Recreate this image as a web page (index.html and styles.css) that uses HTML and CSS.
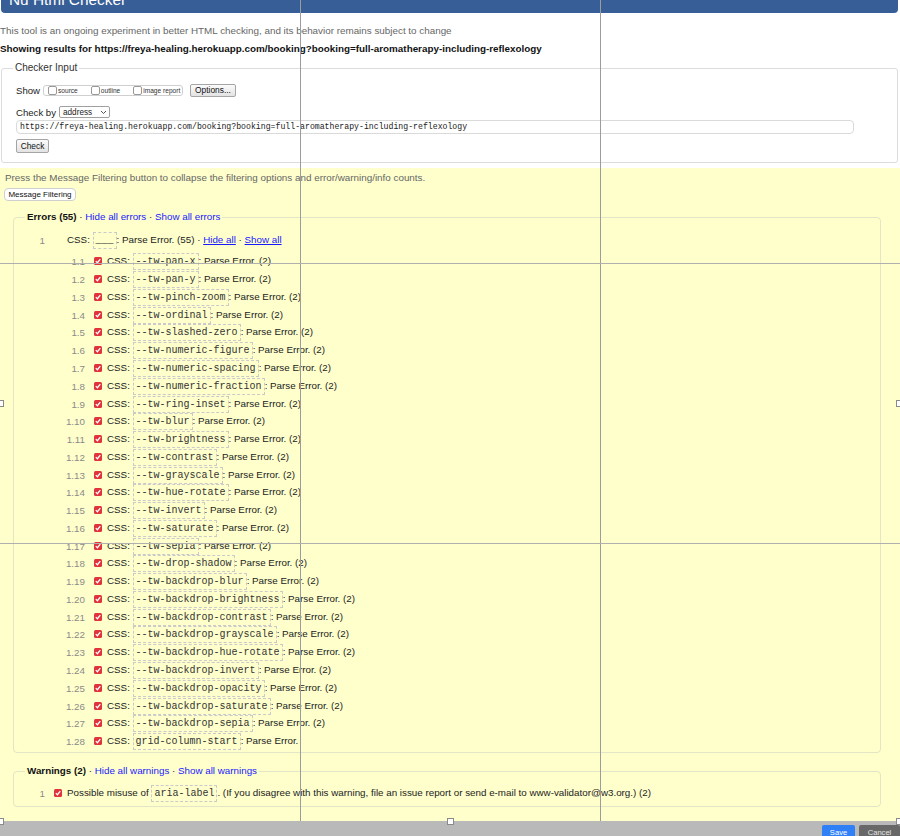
FILE: index.html
```html
<!DOCTYPE html>
<html>
<head>
<meta charset="utf-8">
<title>Nu Html Checker</title>
<link rel="stylesheet" href="styles.css">
</head>
<body>
<div class="stage">
  <div class="page">
    <div class="banner"><h1>Nu Html Checker</h1></div>
    <p class="intro">This tool is an ongoing experiment in better HTML checking, and its behavior remains subject to change</p>
    <p class="showing">Showing results for https://freya-healing.herokuapp.com/booking?booking=full-aromatherapy-including-reflexology</p>
    <fieldset class="checker">
      <legend>Checker Input</legend>
      <div class="row show-row">
        <span class="lbl">Show</span>
        <span class="opts">
          <span class="opt"><span class="box"></span>source</span>
          <span class="opt"><span class="box"></span>outline</span>
          <span class="opt"><span class="box"></span>image report</span>
        </span>
        <span class="btn options">Options...</span>
      </div>
      <div class="row by-row">
        <span class="lbl">Check by</span>
        <span class="select">address<svg class="chev" width="7" height="5" viewBox="0 0 7 5"><polyline points="1,1 3.5,3.5 6,1" fill="none" stroke="#555" stroke-width="1"/></svg></span>
      </div>
      <div class="url">https://freya-healing.herokuapp.com/booking?booking=full-aromatherapy-including-reflexology</div>
      <div class="btn check">Check</div>
    </fieldset>
    <div class="results">
      <p class="press">Press the Message Filtering button to collapse the filtering options and error/warning/info counts.</p>
      <div class="btn filter">Message Filtering</div>
      <fieldset class="group errors">
        <legend><b>Errors (55)</b> · <a>Hide all errors</a> · <a>Show all errors</a></legend>
        <div class="msg head"><span class="num">1</span><span class="txt">CSS: <code>___</code>: Parse Error. (55) · <a class="u">Hide all</a> · <a class="u">Show all</a></span></div>
        <ol class="sub">
          <li class="msg"><span class="num">1.1</span><svg class="cb" viewBox="0 0 8 8"><rect width="8" height="8" rx="1.5" fill="#e0333c"/><path d="M1.8 4.1 L3.4 5.7 L6.3 2.1" fill="none" stroke="#fff" stroke-width="1.3"/></svg><span class="txt">CSS: <code>--tw-pan-x</code>: Parse Error. (2)</span></li>
          <li class="msg"><span class="num">1.2</span><svg class="cb" viewBox="0 0 8 8"><rect width="8" height="8" rx="1.5" fill="#e0333c"/><path d="M1.8 4.1 L3.4 5.7 L6.3 2.1" fill="none" stroke="#fff" stroke-width="1.3"/></svg><span class="txt">CSS: <code>--tw-pan-y</code>: Parse Error. (2)</span></li>
          <li class="msg"><span class="num">1.3</span><svg class="cb" viewBox="0 0 8 8"><rect width="8" height="8" rx="1.5" fill="#e0333c"/><path d="M1.8 4.1 L3.4 5.7 L6.3 2.1" fill="none" stroke="#fff" stroke-width="1.3"/></svg><span class="txt">CSS: <code>--tw-pinch-zoom</code>: Parse Error. (2)</span></li>
          <li class="msg"><span class="num">1.4</span><svg class="cb" viewBox="0 0 8 8"><rect width="8" height="8" rx="1.5" fill="#e0333c"/><path d="M1.8 4.1 L3.4 5.7 L6.3 2.1" fill="none" stroke="#fff" stroke-width="1.3"/></svg><span class="txt">CSS: <code>--tw-ordinal</code>: Parse Error. (2)</span></li>
          <li class="msg"><span class="num">1.5</span><svg class="cb" viewBox="0 0 8 8"><rect width="8" height="8" rx="1.5" fill="#e0333c"/><path d="M1.8 4.1 L3.4 5.7 L6.3 2.1" fill="none" stroke="#fff" stroke-width="1.3"/></svg><span class="txt">CSS: <code>--tw-slashed-zero</code>: Parse Error. (2)</span></li>
          <li class="msg"><span class="num">1.6</span><svg class="cb" viewBox="0 0 8 8"><rect width="8" height="8" rx="1.5" fill="#e0333c"/><path d="M1.8 4.1 L3.4 5.7 L6.3 2.1" fill="none" stroke="#fff" stroke-width="1.3"/></svg><span class="txt">CSS: <code>--tw-numeric-figure</code>: Parse Error. (2)</span></li>
          <li class="msg"><span class="num">1.7</span><svg class="cb" viewBox="0 0 8 8"><rect width="8" height="8" rx="1.5" fill="#e0333c"/><path d="M1.8 4.1 L3.4 5.7 L6.3 2.1" fill="none" stroke="#fff" stroke-width="1.3"/></svg><span class="txt">CSS: <code>--tw-numeric-spacing</code>: Parse Error. (2)</span></li>
          <li class="msg"><span class="num">1.8</span><svg class="cb" viewBox="0 0 8 8"><rect width="8" height="8" rx="1.5" fill="#e0333c"/><path d="M1.8 4.1 L3.4 5.7 L6.3 2.1" fill="none" stroke="#fff" stroke-width="1.3"/></svg><span class="txt">CSS: <code>--tw-numeric-fraction</code>: Parse Error. (2)</span></li>
          <li class="msg"><span class="num">1.9</span><svg class="cb" viewBox="0 0 8 8"><rect width="8" height="8" rx="1.5" fill="#e0333c"/><path d="M1.8 4.1 L3.4 5.7 L6.3 2.1" fill="none" stroke="#fff" stroke-width="1.3"/></svg><span class="txt">CSS: <code>--tw-ring-inset</code>: Parse Error. (2)</span></li>
          <li class="msg"><span class="num">1.10</span><svg class="cb" viewBox="0 0 8 8"><rect width="8" height="8" rx="1.5" fill="#e0333c"/><path d="M1.8 4.1 L3.4 5.7 L6.3 2.1" fill="none" stroke="#fff" stroke-width="1.3"/></svg><span class="txt">CSS: <code>--tw-blur</code>: Parse Error. (2)</span></li>
          <li class="msg"><span class="num">1.11</span><svg class="cb" viewBox="0 0 8 8"><rect width="8" height="8" rx="1.5" fill="#e0333c"/><path d="M1.8 4.1 L3.4 5.7 L6.3 2.1" fill="none" stroke="#fff" stroke-width="1.3"/></svg><span class="txt">CSS: <code>--tw-brightness</code>: Parse Error. (2)</span></li>
          <li class="msg"><span class="num">1.12</span><svg class="cb" viewBox="0 0 8 8"><rect width="8" height="8" rx="1.5" fill="#e0333c"/><path d="M1.8 4.1 L3.4 5.7 L6.3 2.1" fill="none" stroke="#fff" stroke-width="1.3"/></svg><span class="txt">CSS: <code>--tw-contrast</code>: Parse Error. (2)</span></li>
          <li class="msg"><span class="num">1.13</span><svg class="cb" viewBox="0 0 8 8"><rect width="8" height="8" rx="1.5" fill="#e0333c"/><path d="M1.8 4.1 L3.4 5.7 L6.3 2.1" fill="none" stroke="#fff" stroke-width="1.3"/></svg><span class="txt">CSS: <code>--tw-grayscale</code>: Parse Error. (2)</span></li>
          <li class="msg"><span class="num">1.14</span><svg class="cb" viewBox="0 0 8 8"><rect width="8" height="8" rx="1.5" fill="#e0333c"/><path d="M1.8 4.1 L3.4 5.7 L6.3 2.1" fill="none" stroke="#fff" stroke-width="1.3"/></svg><span class="txt">CSS: <code>--tw-hue-rotate</code>: Parse Error. (2)</span></li>
          <li class="msg"><span class="num">1.15</span><svg class="cb" viewBox="0 0 8 8"><rect width="8" height="8" rx="1.5" fill="#e0333c"/><path d="M1.8 4.1 L3.4 5.7 L6.3 2.1" fill="none" stroke="#fff" stroke-width="1.3"/></svg><span class="txt">CSS: <code>--tw-invert</code>: Parse Error. (2)</span></li>
          <li class="msg"><span class="num">1.16</span><svg class="cb" viewBox="0 0 8 8"><rect width="8" height="8" rx="1.5" fill="#e0333c"/><path d="M1.8 4.1 L3.4 5.7 L6.3 2.1" fill="none" stroke="#fff" stroke-width="1.3"/></svg><span class="txt">CSS: <code>--tw-saturate</code>: Parse Error. (2)</span></li>
          <li class="msg"><span class="num">1.17</span><svg class="cb" viewBox="0 0 8 8"><rect width="8" height="8" rx="1.5" fill="#e0333c"/><path d="M1.8 4.1 L3.4 5.7 L6.3 2.1" fill="none" stroke="#fff" stroke-width="1.3"/></svg><span class="txt">CSS: <code>--tw-sepia</code>: Parse Error. (2)</span></li>
          <li class="msg"><span class="num">1.18</span><svg class="cb" viewBox="0 0 8 8"><rect width="8" height="8" rx="1.5" fill="#e0333c"/><path d="M1.8 4.1 L3.4 5.7 L6.3 2.1" fill="none" stroke="#fff" stroke-width="1.3"/></svg><span class="txt">CSS: <code>--tw-drop-shadow</code>: Parse Error. (2)</span></li>
          <li class="msg"><span class="num">1.19</span><svg class="cb" viewBox="0 0 8 8"><rect width="8" height="8" rx="1.5" fill="#e0333c"/><path d="M1.8 4.1 L3.4 5.7 L6.3 2.1" fill="none" stroke="#fff" stroke-width="1.3"/></svg><span class="txt">CSS: <code>--tw-backdrop-blur</code>: Parse Error. (2)</span></li>
          <li class="msg"><span class="num">1.20</span><svg class="cb" viewBox="0 0 8 8"><rect width="8" height="8" rx="1.5" fill="#e0333c"/><path d="M1.8 4.1 L3.4 5.7 L6.3 2.1" fill="none" stroke="#fff" stroke-width="1.3"/></svg><span class="txt">CSS: <code>--tw-backdrop-brightness</code>: Parse Error. (2)</span></li>
          <li class="msg"><span class="num">1.21</span><svg class="cb" viewBox="0 0 8 8"><rect width="8" height="8" rx="1.5" fill="#e0333c"/><path d="M1.8 4.1 L3.4 5.7 L6.3 2.1" fill="none" stroke="#fff" stroke-width="1.3"/></svg><span class="txt">CSS: <code>--tw-backdrop-contrast</code>: Parse Error. (2)</span></li>
          <li class="msg"><span class="num">1.22</span><svg class="cb" viewBox="0 0 8 8"><rect width="8" height="8" rx="1.5" fill="#e0333c"/><path d="M1.8 4.1 L3.4 5.7 L6.3 2.1" fill="none" stroke="#fff" stroke-width="1.3"/></svg><span class="txt">CSS: <code>--tw-backdrop-grayscale</code>: Parse Error. (2)</span></li>
          <li class="msg"><span class="num">1.23</span><svg class="cb" viewBox="0 0 8 8"><rect width="8" height="8" rx="1.5" fill="#e0333c"/><path d="M1.8 4.1 L3.4 5.7 L6.3 2.1" fill="none" stroke="#fff" stroke-width="1.3"/></svg><span class="txt">CSS: <code>--tw-backdrop-hue-rotate</code>: Parse Error. (2)</span></li>
          <li class="msg"><span class="num">1.24</span><svg class="cb" viewBox="0 0 8 8"><rect width="8" height="8" rx="1.5" fill="#e0333c"/><path d="M1.8 4.1 L3.4 5.7 L6.3 2.1" fill="none" stroke="#fff" stroke-width="1.3"/></svg><span class="txt">CSS: <code>--tw-backdrop-invert</code>: Parse Error. (2)</span></li>
          <li class="msg"><span class="num">1.25</span><svg class="cb" viewBox="0 0 8 8"><rect width="8" height="8" rx="1.5" fill="#e0333c"/><path d="M1.8 4.1 L3.4 5.7 L6.3 2.1" fill="none" stroke="#fff" stroke-width="1.3"/></svg><span class="txt">CSS: <code>--tw-backdrop-opacity</code>: Parse Error. (2)</span></li>
          <li class="msg"><span class="num">1.26</span><svg class="cb" viewBox="0 0 8 8"><rect width="8" height="8" rx="1.5" fill="#e0333c"/><path d="M1.8 4.1 L3.4 5.7 L6.3 2.1" fill="none" stroke="#fff" stroke-width="1.3"/></svg><span class="txt">CSS: <code>--tw-backdrop-saturate</code>: Parse Error. (2)</span></li>
          <li class="msg"><span class="num">1.27</span><svg class="cb" viewBox="0 0 8 8"><rect width="8" height="8" rx="1.5" fill="#e0333c"/><path d="M1.8 4.1 L3.4 5.7 L6.3 2.1" fill="none" stroke="#fff" stroke-width="1.3"/></svg><span class="txt">CSS: <code>--tw-backdrop-sepia</code>: Parse Error. (2)</span></li>
          <li class="msg"><span class="num">1.28</span><svg class="cb" viewBox="0 0 8 8"><rect width="8" height="8" rx="1.5" fill="#e0333c"/><path d="M1.8 4.1 L3.4 5.7 L6.3 2.1" fill="none" stroke="#fff" stroke-width="1.3"/></svg><span class="txt">CSS: <code>grid-column-start</code>: Parse Error.</span></li>
        </ol>
      </fieldset>
      <fieldset class="group warnings">
        <legend><b>Warnings (2)</b> · <a>Hide all warnings</a> · <a>Show all warnings</a></legend>
        <div class="msg warn"><span class="num">1</span><svg class="cb" viewBox="0 0 8 8"><rect width="8" height="8" rx="1.5" fill="#e0333c"/><path d="M1.8 4.1 L3.4 5.7 L6.3 2.1" fill="none" stroke="#fff" stroke-width="1.3"/></svg><span class="txt">Possible misuse of <code>aria-label</code>. (If you disagree with this warning, file an issue report or send e-mail to www-validator@w3.org.) (2)</span></div>
      </fieldset>
    </div>
  </div>
  <div class="toolbar"><span class="tbtn save">Save</span><span class="tbtn cancel">Cancel</span></div>
  <div class="gv gv1"></div>
  <div class="gv gv2"></div>
  <div class="gh gh1"></div>
  <div class="gh gh2"></div>
  <div class="handle h-l"></div>
  <div class="handle h-r"></div>
  <div class="handle h-bl"></div>
  <div class="handle h-bm"></div>
  <div class="handle h-br"></div>
</div>
</body>
</html>
```

FILE: styles.css
```css
html, body {
  margin: 0;
  padding: 0;
}
body {
  font-family: "Liberation Sans", Arial, Helvetica, sans-serif;
  color: #222;
}
.stage {
  position: relative;
  width: 900px;
  height: 836px;
  overflow: hidden;
  background: #b9b9b9;
}
.page {
  height: 821px;
  overflow: hidden;
  background: #fff;
}
.banner {
  margin: 0 2px 0 1px;
  height: 13px;
  background: #375e96;
  border-radius: 0 0 4px 4px;
  overflow: hidden;
}
.banner h1 {
  margin: -7px 0 0 8px;
  font-size: 15.4px;
  line-height: 14px;
  font-weight: normal;
  color: #fff;
  white-space: nowrap;
}
.intro {
  margin: 12px 0 0;
  font-size: 9.85px;
  line-height: 12px;
  color: #666;
  white-space: nowrap;
}
.showing {
  margin: 6px 0 0;
  font-size: 9.85px;
  line-height: 12px;
  font-weight: bold;
  color: #111;
  white-space: nowrap;
}
fieldset {
  min-width: 0;
}
.checker {
  margin: 7px 2px 0 1px;
  padding: 9px 10px 9px 14px;
  border: 1px solid #dcdcdc;
  border-radius: 3px;
}
.checker legend {
  padding: 0 2px;
  margin-left: -3px;
  font-size: 10px;
  line-height: 12px;
  color: #333;
}
.row {
  display: flex;
  align-items: center;
  font-size: 9.6px;
  color: #222;
}
.show-row {
  height: 14px;
}
.opts {
  display: flex;
  align-items: center;
  margin-left: 3px;
  height: 11px;
  width: 140px;
  box-sizing: border-box;
  border: 1px solid #cfcfcf;
  border-radius: 3px;
  padding-left: 4px;
  font-size: 6.6px;
  color: #333;
  white-space: nowrap;
}
.opt {
  display: flex;
  align-items: center;
}
.opt + .opt {
  margin-left: 13px;
}
.opt .box {
  width: 7px;
  height: 7px;
  border: 1px solid #999;
  border-radius: 2px;
  background: #fff;
  margin-right: 1px;
}
.btn {
  box-sizing: border-box;
  border: 1px solid #a5a5a5;
  border-radius: 2px;
  background: linear-gradient(#fbfbfb, #e3e3e3);
  color: #111;
  text-align: center;
  white-space: nowrap;
}
.options {
  margin-left: 7px;
  width: 46px;
  height: 13px;
  line-height: 11px;
  font-size: 8.4px;
}
.by-row {
  margin-top: 9px;
  height: 12px;
}
.select {
  display: flex;
  align-items: center;
  justify-content: space-between;
  margin-left: 3px;
  width: 51px;
  height: 12px;
  box-sizing: border-box;
  border: 1px solid #a0a0a0;
  border-radius: 2px;
  padding: 0 2px 0 3px;
  font-size: 8.2px;
  background: #fff;
}
.url {
  margin-top: 2px;
  width: 838px;
  height: 14px;
  box-sizing: border-box;
  border: 1px solid #dadada;
  border-radius: 4px;
  padding-left: 3px;
  font-family: "Liberation Mono", monospace;
  font-size: 8.2px;
  line-height: 12px;
  color: #222;
  white-space: nowrap;
}
.check {
  margin-top: 5px;
  width: 33px;
  height: 14px;
  line-height: 12px;
  font-size: 8.4px;
}
.results {
  margin-top: 5px;
  background: #ffffcc;
  padding: 4px 5px 0;
  height: 660px;
}
.press {
  margin: 0;
  font-size: 9.85px;
  line-height: 12px;
  color: #666;
  white-space: nowrap;
}
.filter {
  margin: 4px 0 0 -1px;
  width: 72px;
  height: 13px;
  line-height: 11px;
  font-size: 8px;
  background: #fff;
  border-color: #cfcfcf;
  border-radius: 4px;
}
.group {
  margin: 10px 14px 0 8px;
  padding: 8px 0 2px 11px;
  border: 1px solid #e4e4c6;
  border-radius: 4px;
}
.group legend {
  padding: 0 2px;
  font-size: 9.8px;
  line-height: 12px;
  color: #222;
  white-space: nowrap;
}
.group legend b {
  color: #111;
}
.group legend a {
  color: #1a1aff;
}
a.u {
  color: #1a1aff;
  text-decoration: underline;
}
.msg {
  display: flex;
  align-items: center;
  height: 17.78px;
  font-size: 9.8px;
  color: #222;
  white-space: nowrap;
}
.head {
  height: 18px;
}
.num {
  flex: none;
  width: 20px;
  text-align: right;
  color: #8a8a8a;
}
.head .txt {
  margin-left: 22px;
}
.cb {
  flex: none;
  width: 8px;
  height: 8px;
  margin: -1px 5px 0 9px;
}
.sub {
  margin: 4px 0 0 40px;
  padding: 0;
  list-style: none;
}
code {
  display: inline-block;
  vertical-align: middle;
  font-family: "Liberation Mono", monospace;
  font-size: 10px;
  line-height: 15px;
  padding: 0 2px;
  border: 1px dashed #cacaca;
  color: #333;
}
.warnings {
  margin-top: 12px;
  padding: 7px 0 4px 11px;
}
.warn {
  height: 18px;
}
.toolbar {
  height: 15px;
  box-sizing: border-box;
  padding-top: 4px;
  display: flex;
  justify-content: flex-end;
  gap: 4px;
}
.tbtn {
  height: 14px;
  line-height: 16px;
  font-size: 7.6px;
  text-align: center;
  border-radius: 2px 2px 0 0;
}
.save {
  width: 33px;
  background: #2f7ff7;
  color: #fff;
}
.cancel {
  width: 41px;
  background: #686868;
  color: #e6e6e6;
}
.gv {
  position: absolute;
  top: 0;
  width: 1px;
  height: 821px;
  background: #9c9c9c;
}
.gv1 { left: 300px; }
.gv2 { left: 600px; }
.gh {
  position: absolute;
  left: 0;
  width: 900px;
  height: 1px;
  background: #b0b0b0;
}
.gh1 { top: 263px; }
.gh2 { top: 543px; }
.handle {
  position: absolute;
  width: 5px;
  height: 5px;
  background: #fff;
  border: 1px solid #8a8a8a;
}
.h-l { left: -3px; top: 400px; }
.h-r { left: 896px; top: 400px; }
.h-bl { left: -3px; top: 818px; }
.h-bm { left: 447px; top: 818px; }
.h-br { left: 896px; top: 818px; }
```
